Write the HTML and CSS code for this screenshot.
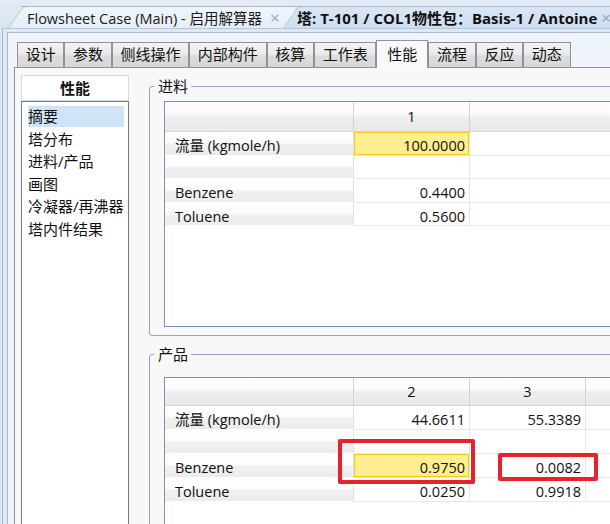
FILE: index.html
```html
<!DOCTYPE html>
<html lang="zh">
<head>
<meta charset="utf-8">
<title>塔: T-101</title>
<link rel="stylesheet" href="styles.css">
</head>
<body>
<div class="doc-tabs">
  <div class="dtab dtab-off"><span class="dtab-title">Flowsheet Case (Main) - 启用解算器</span><span class="dtab-x">×</span></div>
  <div class="dtab dtab-on"><span class="dtab-title">塔: T-101 / COL1物性包：Basis-1 / Antoine</span><span class="dtab-x">×</span></div>
</div>
<div class="window">
  <div class="frame">
    <div class="tabbar">
      <div class="tab">设计</div>
      <div class="tab">参数</div>
      <div class="tab">侧线操作</div>
      <div class="tab">内部构件</div>
      <div class="tab">核算</div>
      <div class="tab">工作表</div>
      <div class="tab tab-on">性能</div>
      <div class="tab">流程</div>
      <div class="tab">反应</div>
      <div class="tab">动态</div>
    </div>
    <div class="panel">
      <div class="nav">
        <div class="nav-head">性能</div>
        <ul class="nav-list">
          <li class="nav-item nav-item-on">摘要</li>
          <li class="nav-item">塔分布</li>
          <li class="nav-item">进料/产品</li>
          <li class="nav-item">画图</li>
          <li class="nav-item">冷凝器/再沸器</li>
          <li class="nav-item">塔内件结果</li>
        </ul>
      </div>
      <div class="main">
        <fieldset class="group group-feed">
          <legend class="group-title">进料</legend>
          <div class="grid grid-feed">
            <div class="row row-head">
              <div class="cell rh hc"></div>
              <div class="cell dc hc">1</div>
              <div class="cell fill hc"></div>
            </div>
            <div class="row">
              <div class="cell rh">流量 (kgmole/h)</div>
              <div class="cell dc num hl">100.0000</div>
              <div class="cell fill"></div>
            </div>
            <div class="row">
              <div class="cell rh"></div>
              <div class="cell dc"></div>
              <div class="cell fill"></div>
            </div>
            <div class="row">
              <div class="cell rh">Benzene</div>
              <div class="cell dc num">0.4400</div>
              <div class="cell fill"></div>
            </div>
            <div class="row">
              <div class="cell rh">Toluene</div>
              <div class="cell dc num">0.5600</div>
              <div class="cell fill"></div>
            </div>
          </div>
        </fieldset>
        <fieldset class="group group-prod">
          <legend class="group-title">产品</legend>
          <div class="grid grid-prod">
            <div class="row row-head">
              <div class="cell rh hc"></div>
              <div class="cell dc hc">2</div>
              <div class="cell dc hc">3</div>
              <div class="cell fill hc"></div>
            </div>
            <div class="row">
              <div class="cell rh">流量 (kgmole/h)</div>
              <div class="cell dc num">44.6611</div>
              <div class="cell dc num">55.3389</div>
              <div class="cell fill"></div>
            </div>
            <div class="row">
              <div class="cell rh"></div>
              <div class="cell dc"></div>
              <div class="cell dc"></div>
              <div class="cell fill"></div>
            </div>
            <div class="row">
              <div class="cell rh">Benzene</div>
              <div class="cell dc num hl">0.9750</div>
              <div class="cell dc num">0.0082</div>
              <div class="cell fill"></div>
            </div>
            <div class="row">
              <div class="cell rh">Toluene</div>
              <div class="cell dc num">0.0250</div>
              <div class="cell dc num">0.9918</div>
              <div class="cell fill"></div>
            </div>
            <div class="mark mark-a"></div>
            <div class="mark mark-b"></div>
          </div>
        </fieldset>
      </div>
    </div>
  </div>
</div>
</body>
</html>
```
FILE: styles.css
```css
html, body {
  margin: 0;
  padding: 0;
}
body {
  width: 610px;
  height: 524px;
  overflow: hidden;
  background: #dde7f3;
  font-family: "Open Sans", "Noto Sans CJK SC", sans-serif;
  font-size: 14px;
  color: #111;
}

/* document tabs */
.doc-tabs {
  position: relative;
  z-index: 0;
  height: 28px;
  box-sizing: border-box;
  display: flex;
  align-items: flex-end;
  padding-left: 20px;
  background: linear-gradient(#e4ebf4, #dae4f1);
  white-space: nowrap;
}
.dtab {
  position: relative;
  z-index: 1;
  height: 22px;
  box-sizing: border-box;
  display: flex;
  align-items: center;
  border-top: 1px solid #a9bbd2;
  font-size: 15px;
}
.dtab::before {
  content: "";
  position: absolute;
  z-index: -1;
  top: -1px;
  bottom: 0;
  left: -12px;
  width: 28px;
  background: inherit;
  border-left: 1px solid #a9bbd2;
  border-top: 1px solid #a9bbd2;
  border-top-left-radius: 5px;
  transform: skewX(-34deg);
  transform-origin: bottom left;
}
.dtab-off {
  width: 275px;
  flex: none;
  padding-left: 7px;
  box-sizing: border-box;
  background: linear-gradient(#f1f5fb, #e5edf7);
  color: #1a1a1a;
  font-size: 14.5px;
}
.dtab-on {
  z-index: 2;
  padding-left: 2px;
  background: linear-gradient(#d9e6f5, #cedff2);
  font-weight: 700;
  color: #111;
}
.dtab-x {
  margin-left: 8px;
  color: #9aa6b4;
  font-weight: 400;
  font-size: 17px;
}
.dtab-on .dtab-x {
  margin-left: 4px;
}

/* window frames */
.window {
  margin-left: 2px;
  border-top: 1px solid #b6c7dc;
  border-left: 1px solid #a5b8cf;
  background: #dde8f5;
  padding: 3px 0 0 4px;
  height: 600px;
}
.frame {
  border-top: 1px solid #a7b9cf;
  border-left: 1px solid #a7b9cf;
  background: #eff4fa;
  padding: 7px 0 0 6px;
  height: 600px;
}

/* tab control */
.tabbar {
  position: relative;
  z-index: 1;
  height: 28px;
  display: flex;
  align-items: flex-end;
  padding-left: 3px;
  margin-bottom: -1px;
}
.tab {
  height: 25px;
  box-sizing: border-box;
  margin-bottom: 1px;
  padding: 0 7.7px;
  border: 1px solid #8d929b;
  border-bottom: none;
  background: linear-gradient(#f3f3f3 0%, #ebebeb 45%, #dddddd 55%, #d7d7d7 100%);
  font-size: 15px;
  line-height: 23px;
  white-space: nowrap;
}
.tab-on {
  height: 28px;
  margin-bottom: 0;
  padding: 0 10px;
  background: #f9f9f9;
  line-height: 26px;
}
.panel {
  display: flex;
  align-items: flex-start;
  border-top: 1px solid #8d929b;
  border-left: 1px solid #8d929b;
  background: #f8f8f8;
  padding: 7px 0 0 6px;
  height: 600px;
}

/* left navigation */
.nav {
  width: 108px;
  flex: none;
  display: flex;
  flex-direction: column;
}
.nav-head {
  height: 26px;
  box-sizing: border-box;
  border: 1px solid #dadada;
  background: #fff;
  text-align: center;
  font-weight: 700;
  font-size: 15px;
  line-height: 24px;
}
.nav-list {
  list-style: none;
  margin: 0;
  padding: 4px 0 0;
  height: 460px;
  border: 1px solid #6d7d8f;
  background: #fff;
}
.nav-item {
  height: 22.5px;
  box-sizing: border-box;
  margin: 0 4px 0 3px;
  padding: 0 0 0 3px;
  font-size: 15px;
  line-height: 21px;
  white-space: nowrap;
}
.nav-item-on {
  background: #cfe4f8;
  background-clip: content-box;
  padding-bottom: 1.5px;
  padding-top: 0;
}

/* content groups */
.main {
  margin-left: 20px;
  width: 600px;
  flex: none;
}
.group {
  margin: 1px 0 0;
  border: 1px solid #8ba6c8;
  border-radius: 3px;
  padding: 5px 0 8px 14px;
  min-width: 0;
}
.group-prod {
  margin-top: 8px;
  padding-top: 13px;
}
.group-title {
  margin-left: -10px;
  padding: 0 3px 0 4px;
  font-size: 15px;
  line-height: 20px;
  color: #111;
}
.grid {
  position: relative;
  width: 460px;
  height: 224px;
  border: 1px solid #7594bc;
  background: #fff;
  overflow: visible;
}
.grid-prod {
  height: 200px;
}
.row {
  display: flex;
  height: 23.5px;
  box-sizing: border-box;
}
.grid-prod .row {
  height: 24px;
}
.row-head {
  height: 30px;
}
.grid-prod .row-head {
  height: 28px;
}
.cell {
  box-sizing: border-box;
  height: 100%;
  border-right: 1px solid #e6e6e6;
  border-bottom: 1px solid #e8e8e8;
  padding-top: 2px;
  line-height: 23px;
  font-size: 14.5px;
  white-space: nowrap;
  overflow: hidden;
}
.rh {
  width: 189px;
  flex: none;
  padding-left: 10px;
  border-right-color: #e2e2e2;
  border-bottom-color: #ffffff;
  background: linear-gradient(#ffffff 0%, #fcfcfc 45%, #f0f0f0 55%, #ececec 100%);
}
.dc {
  width: 116px;
  flex: none;
}
.fill {
  flex: 1;
  border-right: none;
}
.num {
  text-align: right;
  padding-right: 4px;
}
.hc {
  background: linear-gradient(#ffffff 0%, #fafafa 42%, #efefef 52%, #e8e8e8 100%);
  border-right: 1px solid #d2d2d2;
  border-bottom: 1px solid #d6d6d6;
  text-align: center;
  padding-top: 0;
  line-height: 30px;
}
.grid-prod .hc {
  line-height: 28px;
}
.hc.fill {
  border-right: none;
}
.hl {
  background: #fdee8f;
  box-shadow: inset 0 0 0 1px #f3cd1c;
}

/* annotation marks */
.mark {
  position: absolute;
  border: 4px solid #e8222c;
  border-radius: 2px;
  box-sizing: border-box;
}
.mark-a {
  left: 173px;
  top: 61px;
  width: 137px;
  height: 45px;
}
.mark-b {
  left: 333px;
  top: 75px;
  width: 100px;
  height: 28px;
}
```
